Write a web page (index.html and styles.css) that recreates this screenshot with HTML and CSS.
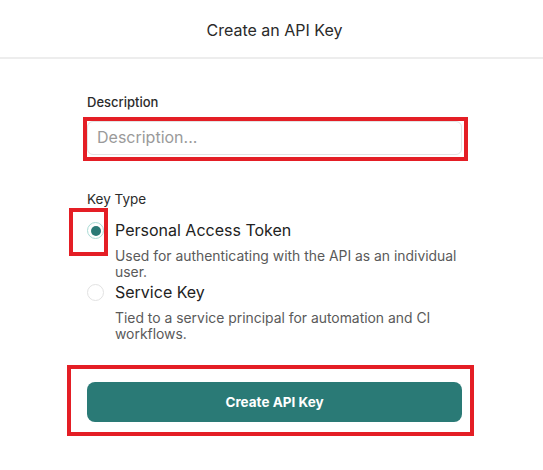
FILE: index.html
```html
<!DOCTYPE html>
<html>
<head>
<meta charset="utf-8">
<link rel="stylesheet" href="styles.css">
</head>
<body>
<div class="dialog">
  <header class="header">Create an API Key</header>
  <main class="body">
    <label class="label">Description</label>
    <div class="input">Description...</div>
    <div class="label type-label">Key Type</div>
    <div class="options">
      <div class="option">
        <span class="radio checked"><span class="dot"></span></span>
        <div class="option-text">
          <div class="option-title">Personal Access Token</div>
          <div class="option-desc">Used for authenticating with the API as an individual user.</div>
        </div>
      </div>
      <div class="option second">
        <span class="radio"></span>
        <div class="option-text">
          <div class="option-title">Service Key</div>
          <div class="option-desc">Tied to a service principal for automation and CI workflows.</div>
        </div>
      </div>
    </div>
    <button class="submit">Create API Key</button>
  </main>
  <div class="mark mark-input"></div>
  <div class="mark mark-radio"></div>
  <div class="mark mark-button"></div>
</div>
</body>
</html>
```
FILE: styles.css
```css
* { box-sizing: border-box; }
html, body { margin: 0; padding: 0; background: #fff; }
body { font-family: Inter, "Noto Sans", sans-serif; color: #222; width: 543px; height: 470px; overflow: hidden; }
.dialog { position: relative; width: 543px; height: 470px; }
.header {
  height: 59px;
  border-bottom: 2px solid #ededed;
  display: flex; align-items: center; justify-content: center;
  font-size: 16px; color: #2a2a2a; padding: 3px 0 0 6px;
}
.body { padding: 34px 81px 0 87px; display: flex; flex-direction: column; }
.label { font-size: 13px; line-height: 18px; font-weight: 500; color: #2b2b2b; }
.input {
  margin-top: 10px; height: 34px;
  border: 1px solid #e3e3e3; border-radius: 6px;
  padding: 0 9px 2px; display: flex; align-items: center;
  font-size: 16px; color: #9a9a9a;
}
.type-label { margin-top: 35px; font-weight: 400; font-size: 13.5px; }
.options { margin-top: 12px; display: flex; flex-direction: column; gap: 2px; }
.option { display: flex; gap: 11px; align-items: flex-start; }
.radio {
  width: 17px; height: 17px; border-radius: 50%; border: 1px solid #e2e2e2;
  margin-top: 2px; flex: none; display: flex; align-items: center; justify-content: center;
}
.radio.checked { border-color: #a9dbd5; }
.dot { width: 10px; height: 10px; border-radius: 50%; background: #2a7a76; }
.option-title { font-size: 16px; line-height: 20px; color: #222; }
.option-desc { margin-top: 8px; font-size: 13.9px; line-height: 16px; color: #5a5a5a; }
.submit {
  margin-top: 40px; height: 40px; border: none; border-radius: 8px;
  background: #2a7a76; color: #fff; font-family: Inter, sans-serif;
  font-size: 13.5px; font-weight: 700;
}
.mark { position: absolute; border: 4px solid #e41e25; }
.mark-input { left: 83px; top: 117px; width: 385px; height: 44px; }
.mark-radio { left: 69px; top: 208px; width: 39px; height: 48px; }
.mark-button { left: 67px; top: 365px; width: 407px; height: 71px; }
```
